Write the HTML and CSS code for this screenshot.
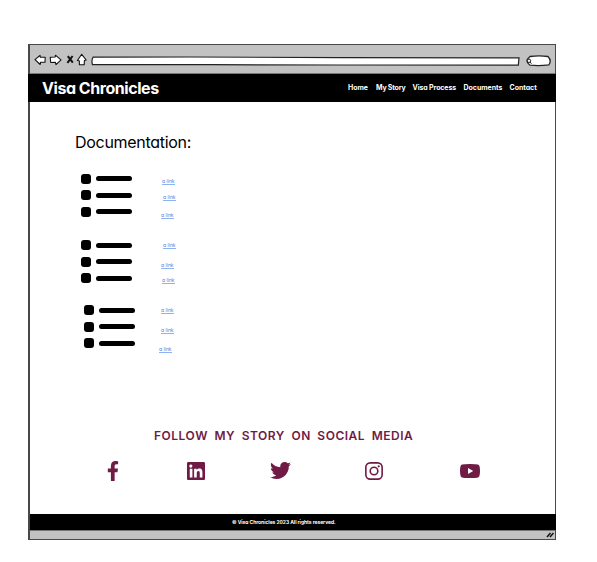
FILE: index.html
```html
<!DOCTYPE html>
<html lang="en">
<head>
<meta charset="utf-8">
<title>Visa Chronicles</title>
<link rel="stylesheet" href="styles.css">
</head>
<body>
<div class="window">
  <div class="toolbar">
    <svg class="controls" width="60" height="20" viewBox="0 0 60 20" fill="#fff" stroke="#111" stroke-width="1.1" stroke-linejoin="round">
      <path d="M1 9.7 6 5.3 6.4 7.3H11.2L11 12.2H6.5L6.2 14.5Z"/>
      <path d="M16.2 7.2 21.2 7 21.4 5.2 27 9.9 22 14.6 21.4 12.4 16.7 12.5Z"/>
      <path d="M33.8 6.2 38.8 12.6M38.6 6 33.4 12.8" stroke-width="2"/>
      <path d="M47.7 4.3 52.2 10 50.4 10.5 50.2 14.7H45.4L45.3 10.8 43.4 10.5Z"/>
    </svg>
    <svg class="address" width="429" height="10" viewBox="0 0 429 10" fill="#fff" stroke="#222"><path d="M2 1.2 100 1 250 1.6 428 1.8 427.3 9.2 250 9 120 8.7 1.4 8.6Q.3 4 2 1.2Z" stroke-width="1.2"/></svg>
    <svg class="search" width="26" height="12" viewBox="0 0 26 12" fill="#fff" stroke="#222"><path d="M5 1.5Q14 .1 23 1.5 27 5.7 23.8 9.9 14 11.3 5 10.2-1 6.2 5 1.5Z" stroke-width="1.3"/><circle cx="4" cy="5.8" r="1.7"/><path d="m5 7 1.5 1.7"/></svg>
  </div>
  <header class="header">
    <div class="brand">Visa Chronicles</div>
    <nav class="nav">
      <a class="n-home">Home</a><a class="n-story">My Story</a><a class="n-visa">Visa Process</a><a class="n-docs">Documents</a><a class="n-contact">Contact</a>
    </nav>
  </header>
  <main class="main">
    <h1 class="title">Documentation:</h1>
    <section class="group">
      <ul class="bullets"><li></li><li></li><li></li></ul>
      <div class="links"><a class="in1">a link</a><a class="in2">a link</a><a class="drop2">a link</a></div>
    </section>
    <section class="group second">
      <ul class="bullets"><li></li><li></li><li></li></ul>
      <div class="links"><a class="in2">a link</a><a class="drop4">a link</a><a class="in1 rise1">a link</a></div>
    </section>
    <section class="group third">
      <ul class="bullets"><li></li><li></li><li></li></ul>
      <div class="links"><a>a link</a><a class="drop4">a link</a><a class="out2 drop3">a link</a></div>
    </section>
    <h2 class="follow">FOLLOW MY STORY ON SOCIAL MEDIA</h2>
    <div class="social">
      <svg class="facebook" width="12" height="20" viewBox="0 0 320 512" preserveAspectRatio="none"><path d="M279 288l14-93h-89v-60c0-25 13-50 53-50h40V7s-37-7-72-7c-73 0-121 45-121 125v70H22v93h82v224h100V288z"/></svg>
      <svg class="linkedin" width="18" height="18" viewBox="0 32 448 448"><path d="M416 32H32C14 32 0 47 0 64v384c0 18 14 32 32 32h384c18 0 32-14 32-32V64c0-17-14-32-32-32zM135 416H69V202h66zm-33-243a39 39 0 1 1 0-77 39 39 0 0 1 0 77zm282 243h-66V312c0-25-1-57-35-57s-40 27-40 55v106h-66V202h64v29h1c9-17 31-35 63-35 67 0 79 45 79 102z"/></svg>
      <svg class="twitter" width="21" height="17" viewBox="0 48 512 416"><path d="M459 152v14c0 138-106 298-299 298-59 0-115-17-160-47 56 6 111-10 155-44-45-1-84-31-98-73 15 3 32 2 48-2-49-10-85-53-85-105 14 8 30 13 48 14-48-33-61-95-33-142 53 65 131 105 217 109-15-68 36-126 103-126 30 0 58 12 77 33 25-5 48-14 67-26-8 25-25 46-46 58 21-2 42-8 60-16-15 22-32 40-54 55z"/></svg>
      <svg class="instagram" width="18" height="18" viewBox="0 0 18 18"><rect x=".85" y=".85" width="16.3" height="16.3" rx="4.4" fill="none" stroke="#701b45" stroke-width="1.6"/><circle cx="9" cy="9" r="3.8" fill="none" stroke="#701b45" stroke-width="1.6"/><circle cx="13.7" cy="4.3" r="1.1"/></svg>
      <svg class="youtube" width="20" height="14" viewBox="0 0 20 14"><path d="M10 0Q16 0 18 .6 19.2 1 19.6 2.5 20.4 7 19.6 11.3 19.2 13 18 13.4 16 14 10 14T2 13.4Q.8 13 .4 11.3-.4 7 .4 2.5.8 1 2 .6 4 0 10 0ZM8 4v6l5.2-3Z"/></svg>
    </div>
  </main>
  <footer class="footer"><span>© Visa Chronicles 2023 All rights reserved.</span></footer>
  <div class="status"><svg width="8" height="6" viewBox="0 0 8 6" stroke="#111" stroke-width="1.5"><path d="M1 5 4.5 1M4 5 7.5 1"/></svg></div>
</div>
</body>
</html>
```
FILE: styles.css
```css
* { box-sizing: border-box; }
body { margin: 0; background: #fff; font-family: Inter, "Liberation Sans", sans-serif; font-feature-settings: "cv11" 1; }
h1, h2, ul { margin: 0; padding: 0; font-weight: 400; }
svg { display: block; flex: none; }
.window { width: 528px; height: 496px; margin: 44px 0 0 28px; border: 1px solid #484848; border-left-width: 2px; display: flex; flex-direction: column; }
.toolbar { height: 29px; flex: none; background: #c2c2c2; border-bottom: 1px solid #777; display: flex; align-items: center; padding-left: 4px; }
.controls { margin-top: 1px; }
.address { margin: 3px 0 0 -3px; }
.search { margin: 4px 0 0 5px; }
.header { height: 28px; flex: none; background: #000; color: #fff; display: flex; align-items: center; margin: 0 -1px 0 -2px; padding-left: 14px; }
.brand { width: 306px; font-size: 16px; font-weight: 700; letter-spacing: -.45px; white-space: nowrap; }
.nav { display: flex; font-size: 7px; font-weight: 700; letter-spacing: -.03px; white-space: nowrap; margin-top: -1px; }
.n-home { width: 28px; }
.n-story { width: 36.5px; letter-spacing: -.2px; }
.n-visa { width: 51px; letter-spacing: -.1px; }
.n-docs { width: 46px; }
.main { height: 412px; flex: none; background: #fff; padding-left: 45px; }
.title { height: 20px; margin-top: 30px; font-size: 16px; line-height: 20px; letter-spacing: -.3px; color: #000; }
.group { display: flex; height: 44px; margin: 21.6px 0 0 6px; }
.group.second { margin-top: 22.8px; }
.group.third { margin-top: 21.1px; }
.bullets { width: 80px; list-style: none; }
.third .bullets { padding-left: 3px; }
.bullets li { display: flex; align-items: center; gap: 5px; height: 10px; margin-bottom: 6.5px; }
.bullets li::before { content: ""; width: 10px; height: 10px; border-radius: 3px; background: #000; }
.bullets li::after { content: ""; width: 36px; height: 5px; border-radius: 3px; background: #000; }
.links { display: flex; flex-direction: column; align-items: flex-start; gap: 10px; padding-top: 5.4px; }
.second .links { padding-top: 2.6px; }
.third .links { padding-top: 2.5px; }
.links a { height: 6px; font-size: 5px; line-height: 5px; letter-spacing: 0; color: #4f7fe0; border-bottom: 1px solid #8db4f2; }
.links .in1 { margin-left: 1px; }
.links .in2 { margin-left: 2px; }
.links .out2 { margin-left: -2px; }
.links .drop2 { margin-top: 2px; }
.links .drop3 { margin-top: 3px; }
.links .drop4 { margin-top: 4px; }
.links .rise1 { margin-top: -1px; }
.follow { margin: 78.5px 0 0 79px; height: 16px; line-height: 16px; font-size: 12px; font-weight: 600; letter-spacing: .52px; word-spacing: 3px; color: #701b45; white-space: nowrap; }
.social { display: flex; align-items: center; height: 20px; margin: 17px 0 0 32px; fill: #701b45; }
.linkedin { margin-left: 68px; }
.twitter { margin-left: 65px; }
.instagram { margin-left: 74px; }
.youtube { margin-left: 77px; }
.footer { height: 16px; flex: none; background: #000; color: #fff; margin-right: -1px; padding-left: 202px; font-size: 5px; line-height: 16px; font-weight: 700; letter-spacing: -.06px; white-space: nowrap; }
.status { flex: 1; background: #c2c2c2; border-top: 1px solid #777; display: flex; justify-content: flex-end; align-items: center; padding-right: 1px; }
```
